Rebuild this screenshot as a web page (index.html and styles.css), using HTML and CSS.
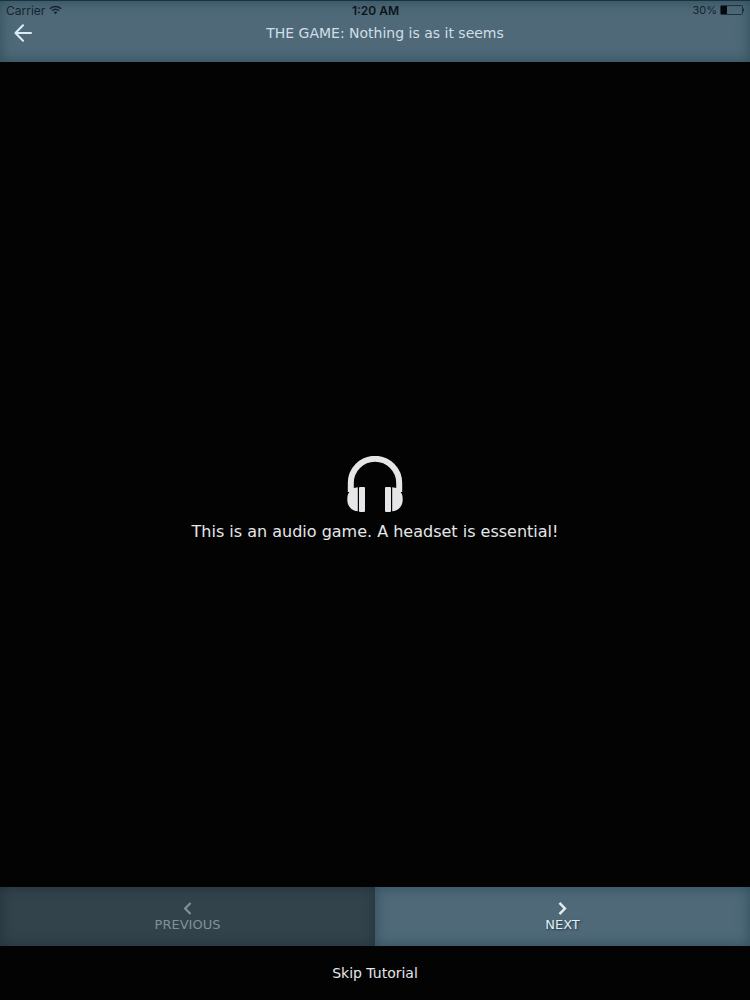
FILE: index.html
```html
<!DOCTYPE html>
<html lang="en">
<head>
    <meta charset="UTF-8">
    <meta name="viewport" content="width=device-width, initial-scale=1.0">
    <title>THE GAME: Nothing is as it seems</title>
    <link rel="stylesheet" href="styles.css">
</head>
<body>
    <header class="top-bar">
        <div class="status-bar">
            <div class="status-left">
                <span>Carrier</span>
                <svg class="wifi-icon" viewBox="0 0 14 10" aria-hidden="true">
                    <path d="M1 3.6a9 9 0 0 1 12 0M3.2 5.8a5.8 5.8 0 0 1 7.6 0" fill="none" stroke="currentColor" stroke-width="1.6"/>
                    <path d="M4.9 7.5a3.3 3.3 0 0 1 4.2 0L7 9.7z" fill="currentColor"/>
                </svg>
            </div>
            <span class="status-time">1:20 AM</span>
            <div class="status-right">
                <span>30%</span>
                <svg class="battery-icon" viewBox="0 0 25 10" aria-hidden="true">
                    <rect x="0.5" y="0.5" width="22" height="9" rx="1" fill="none" stroke="currentColor" stroke-width="0.8"/>
                    <rect x="1" y="1" width="6" height="8" fill="#040a10"/>
                    <path d="M23 3q2 2 0 4z" fill="currentColor"/>
                </svg>
            </div>
        </div>
        <div class="nav-bar">
            <button type="button" class="back-button" aria-label="Back">
                <svg viewBox="0 0 18 18" aria-hidden="true">
                    <path d="M9 1.2L1.5 9L9 16.8M1.8 9H17" fill="none" stroke="currentColor" stroke-width="2" stroke-linecap="round" stroke-linejoin="round"/>
                </svg>
            </button>
            <h1>THE GAME: Nothing is as it seems</h1>
        </div>
    </header>

    <main class="slide">
        <svg class="headset-icon" viewBox="0 0 56 56" aria-hidden="true">
            <path d="M3.8 36V27a24.2 24.2 0 0 1 48.4 0v9" fill="none" stroke="currentColor" stroke-width="6"/>
            <path d="M10.8 31.2v24C4.2 54.8 0.3 50 0.3 43.5Q0.3 38 2.2 36.4L1 33z" fill="currentColor"/>
            <path d="M45.2 31.2v24c6.6-.4 10.5-5.2 10.5-11.7q0-5.5-1.9-7.1L55 33z" fill="currentColor"/>
            <rect x="12" y="31" width="6" height="25" rx="1" fill="currentColor"/>
            <rect x="38" y="31" width="6" height="25" rx="1" fill="currentColor"/>
        </svg>
        <p>This is an audio game. A headset is essential!</p>
    </main>

    <footer>
        <div class="pager">
            <button type="button" class="pager-button" disabled>
                <svg viewBox="0 0 8 12" aria-hidden="true">
                    <path d="M6.8 0.9L1.8 6l5 5.1" fill="none" stroke="currentColor" stroke-width="2"/>
                </svg>
                <span>PREVIOUS</span>
            </button>
            <button type="button" class="pager-button">
                <svg viewBox="0 0 8 12" aria-hidden="true">
                    <path d="M1.2 0.9l5 5.1l-5 5.1" fill="none" stroke="currentColor" stroke-width="2.3"/>
                </svg>
                <span>NEXT</span>
            </button>
        </div>
        <button type="button" class="skip-button">Skip Tutorial</button>
    </footer>
</body>
</html>
```
FILE: styles.css
```css
* {
    margin: 0;
    padding: 0;
    box-sizing: border-box;
}

body {
    display: flex;
    flex-direction: column;
    min-height: 100vh;
    background-color: #030304;
    color: #e6e6e8;
    font-family: "DejaVu Sans", sans-serif;
}

button {
    border: none;
    background: none;
    color: inherit;
    font-family: inherit;
    cursor: pointer;
}

.top-bar,
.pager-button {
    background-color: #4f6978;
    box-shadow: inset 0 0 14px #2e4d5a;
}

.top-bar {
    padding-bottom: 16px;
    border-top: 1px solid #163344;
}

.status-bar {
    display: grid;
    grid-template-columns: 1fr auto 1fr;
    align-items: center;
    height: 18px;
    padding: 0 5px 0 6px;
    color: #14252f;
    font-family: Inter, sans-serif;
    font-size: 12px;
}

.status-left,
.status-right {
    display: flex;
    align-items: center;
    gap: 4px;
}

.status-right {
    justify-content: flex-end;
    gap: 3px;
    font-size: 11px;
}

.status-time {
    color: #0b151c;
    font-weight: 600;
}

.wifi-icon {
    width: 13px;
    height: 10px;
}

.battery-icon {
    width: 25px;
    height: 10px;
}

.nav-bar {
    display: grid;
    grid-template-columns: 48px 1fr 28px;
    align-items: center;
    height: 27px;
}

.back-button {
    height: 27px;
    padding-left: 14px;
    color: #dcecf4;
    text-align: left;
}

.back-button svg {
    display: block;
    width: 18px;
    height: 18px;
}

h1 {
    grid-column: 2;
    color: #cfdfe8;
    font-size: 14px;
    font-weight: normal;
    line-height: 20px;
    text-align: center;
}

.slide {
    display: flex;
    flex: 1;
    flex-direction: column;
    align-items: center;
    justify-content: center;
    gap: 8px;
    padding-top: 50px;
}

.headset-icon {
    width: 56px;
    height: 56px;
}

.slide p {
    font-size: 16px;
    line-height: 24px;
    text-align: center;
}

.pager {
    display: grid;
    grid-template-columns: 1fr 1fr;
}

.pager-button {
    display: flex;
    flex-direction: column;
    align-items: center;
    gap: 1px;
    height: 59px;
    padding-top: 15px;
    color: #e0eef2;
    font-size: 13px;
    line-height: 18px;
    text-shadow: 1px 1px 2px #1f3540;
}

.pager-button svg {
    width: 9px;
    height: 13px;
}

.pager-button:disabled {
    background-color: #33434c;
    box-shadow: inset 0 0 14px #21323b;
    color: #829196;
    text-shadow: none;
    cursor: default;
}

.skip-button {
    display: block;
    width: 100%;
    height: 54px;
    font-size: 14px;
    line-height: 18px;
}
```
